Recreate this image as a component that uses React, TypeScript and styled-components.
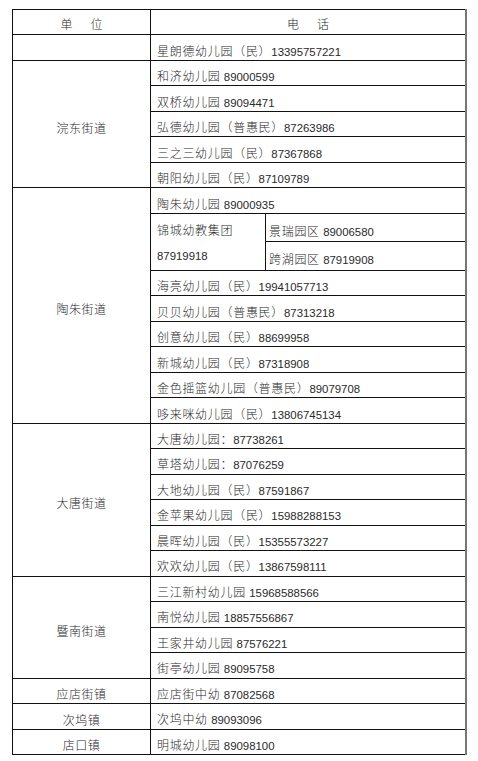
import React from 'react';
import styled, { createGlobalStyle } from 'styled-components';

const GlobalStyle = createGlobalStyle`
  html, body {
    margin: 0;
    padding: 0;
    background: #fff;
  }
  body {
    font-family: "Noto Sans CJK SC", "Liberation Sans", sans-serif;
    color: #2a2a2a;
  }
`;

const ROW_H = 25.49;

const Page = styled.div`
  padding: 9px 0 0 12px;
`;

const Table = styled.table`
  border-collapse: collapse;
  table-layout: fixed;
  width: 455px;
  border-top: 1px solid #7a7a7a;
  border-right: 2px solid #777;
  border-left: 1px solid #111;
  border-bottom: 1px solid #111;
`;

const Cell = styled.td<{ $center?: boolean }>`
  border: 1px solid #111;
  height: ${ROW_H}px;
  box-sizing: border-box;
  padding: 7px 3px 0 ${(p) => (p.$center ? '3px' : '6px')};
  line-height: 16px;
  vertical-align: middle;
  text-align: ${(p) => (p.$center ? 'center' : 'left')};
  font-size: 12px;
  font-weight: 300;
  letter-spacing: ${(p) => (p.$center ? '0.5px' : '0.7px')};
  white-space: nowrap;
  overflow: hidden;
`;

const HeadCell = styled(Cell)`
  padding-top: 4px;
`;

const StackCell = styled(Cell)`
  vertical-align: top;
  padding-top: 3px;
  line-height: ${ROW_H}px;
`;

const SubCell = styled(Cell)`
  padding-left: 3px;
`;

const HeadLabel = styled.div`
  display: flex;
  justify-content: center;
  gap: 18px;
  letter-spacing: 0;
`;

const Num = styled.span`
  font-family: "Liberation Sans", sans-serif;
  font-size: 11.4px;
  font-weight: 400;
  letter-spacing: 0;
`;

const BottomStrip = styled.div`
  margin-top: 6px;
  height: 2px;
  background: #e8e8e8;
`;

type SplitRow = { main: [string, string]; subs: [string, string] };
type Row = string | SplitRow;

interface Group {
  unit: string;
  rows: Row[];
}

const groups: Group[] = [
  { unit: '', rows: ['星朗德幼儿园（民）13395757221'] },
  {
    unit: '浣东街道',
    rows: [
      '和济幼儿园 89000599',
      '双桥幼儿园 89094471',
      '弘德幼儿园（普惠民）87263986',
      '三之三幼儿园（民）87367868',
      '朝阳幼儿园（民）87109789',
    ],
  },
  {
    unit: '陶朱街道',
    rows: [
      '陶朱幼儿园 89000935',
      { main: ['锦城幼教集团', '87919918'], subs: ['景瑞园区 89006580', '跨湖园区 87919908'] },
      '海亮幼儿园（民）19941057713',
      '贝贝幼儿园（普惠民）87313218',
      '创意幼儿园（民）88699958',
      '新城幼儿园（民）87318908',
      '金色摇篮幼儿园（普惠民）89079708',
      '哆来咪幼儿园（民）13806745134',
    ],
  },
  {
    unit: '大唐街道',
    rows: [
      '大唐幼儿园：87738261',
      '草塔幼儿园：87076259',
      '大地幼儿园（民）87591867',
      '金苹果幼儿园（民）15988288153',
      '晨晖幼儿园（民）15355573227',
      '欢欢幼儿园（民）13867598111',
    ],
  },
  {
    unit: '暨南街道',
    rows: [
      '三江新村幼儿园 15968588566',
      '南悦幼儿园 18857556867',
      '王家井幼儿园 87576221',
      '街亭幼儿园 89095758',
    ],
  },
  { unit: '应店街镇', rows: ['应店街中幼 87082568'] },
  { unit: '次坞镇', rows: ['次坞中幼 89093096'] },
  { unit: '店口镇', rows: ['明城幼儿园 89098100'] },
];

// digits get a latin face, the rest stays CJK
function Text({ value }: { value: string }) {
  const parts = value.split(/(\d+)/);
  return (
    <>
      {parts.map((p, i) => (/^\d+$/.test(p) ? <Num key={i}>{p}</Num> : <React.Fragment key={i}>{p}</React.Fragment>))}
    </>
  );
}

function span(rows: Row[]) {
  return rows.reduce((n, r) => n + (typeof r === 'string' ? 1 : 2), 0);
}

function GroupRows({ group }: { group: Group }) {
  const out: React.ReactNode[] = [];
  const total = span(group.rows);
  group.rows.forEach((row, i) => {
    const unitCell = i === 0 ? (
      <Cell $center rowSpan={total}>{group.unit}</Cell>
    ) : null;
    if (typeof row === 'string') {
      out.push(
        <tr key={i}>
          {unitCell}
          <Cell colSpan={2}><Text value={row} /></Cell>
        </tr>
      );
    } else {
      out.push(
        <tr key={i + 'a'}>
          {unitCell}
          <StackCell rowSpan={2}>
            <div>{row.main[0]}</div>
            <div><Num>{row.main[1]}</Num></div>
          </StackCell>
          <SubCell><Text value={row.subs[0]} /></SubCell>
        </tr>,
        <tr key={i + 'b'}>
          <SubCell><Text value={row.subs[1]} /></SubCell>
        </tr>
      );
    }
  });
  return <>{out}</>;
}

export default function App() {
  return (
    <>
      <GlobalStyle />
      <Page>
        <Table>
          <colgroup>
            <col style={{ width: 138 }} />
            <col style={{ width: 115 }} />
            <col />
          </colgroup>
          <tbody>
            <tr>
              <HeadCell $center>
                <HeadLabel><span>单</span><span>位</span></HeadLabel>
              </HeadCell>
              <HeadCell $center colSpan={2}>
                <HeadLabel><span>电</span><span>话</span></HeadLabel>
              </HeadCell>
            </tr>
            {groups.map((g, i) => (
              <GroupRows key={i} group={g} />
            ))}
          </tbody>
        </Table>
      </Page>
      <BottomStrip />
    </>
  );
}
